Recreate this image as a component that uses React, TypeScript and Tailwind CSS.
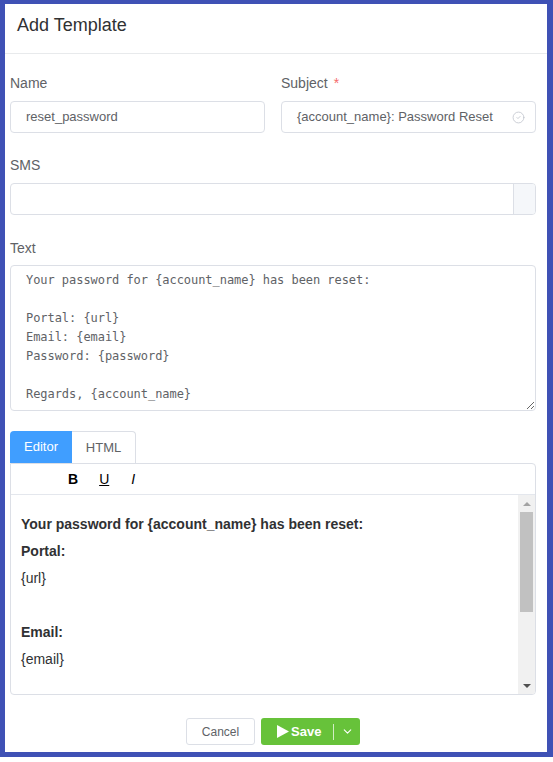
import React from 'react'
import { CircleCheck, ChevronDown } from 'lucide-react'

// ─── Add Template dialog ─────────────────────────────────────────────────────

const TEXT_BODY = `Your password for {account_name} has been reset:

Portal: {url}
Email: {email}
Password: {password}

Regards, {account_name}`

const sans = "font-['Liberation_Sans',Arial,sans-serif]"

export default function App() {
  return (
    <div className={`w-[553px] h-[762px] bg-white ${sans}`}>
      <div className="w-[553px] h-[757px] box-border border-l-[5px] border-t-[4px] border-r-[6px] border-b-[5px] border-[#3f51b5] flex flex-col">
        {/* Header */}
        <div className="h-[50px] shrink-0 border-b border-[#e8eaec] flex items-center pl-[12px] pb-[6px]">
          <h1 className="text-[18px] text-[#303133]">Add Template</h1>
        </div>

        {/* Form */}
        <div className="flex-1 flex flex-col pl-[5px] pr-[11px] pt-[19px]">
          <div className="grid grid-cols-2 gap-x-[16px]">
            <Field label="Name">
              <div className="h-[32px] border border-[#dcdfe6] rounded-[4px] flex items-center px-[15px] text-[13px] text-[#606266]">
                reset_password
              </div>
            </Field>
            <Field label="Subject" required>
              <div className="h-[32px] border border-[#dcdfe6] rounded-[4px] flex items-center pl-[15px] pr-[10px] text-[13px] text-[#606266]">
                <span className="flex-1">{'{account_name}: Password Reset'}</span>
                <CircleCheck className="w-[13px] h-[13px] text-[#c0c4cc]" strokeWidth={1.5} />
              </div>
            </Field>
          </div>

          <div className="mt-[22px]">
            <Field label="SMS">
              <div className="h-[32px] border border-[#dcdfe6] rounded-[4px] flex overflow-hidden">
                <div className="flex-1" />
                <div className="w-[22px] bg-[#f5f7fa] border-l border-[#dcdfe6]" />
              </div>
            </Field>
          </div>

          <div className="mt-[23px]">
            <Field label="Text" gap="mb-[7px]">
              <textarea
                readOnly
                value={TEXT_BODY}
                className="block w-full h-[146px] border border-[#dcdfe6] rounded-[4px] px-[15px] py-[5px] text-[12px] leading-[19px] text-[#606266] resize-y outline-none font-['DejaVu_Sans_Mono',monospace] tracking-[-0.05px] overflow-hidden"
              />
            </Field>
          </div>

          {/* Editor tabs */}
          <div className="mt-[20px] flex">
            <div className="w-[62px] h-[32px] bg-[#409eff] text-white text-[13px] flex items-center justify-center rounded-tl-[4px]">
              Editor
            </div>
            <div className="w-[64px] h-[32px] bg-white text-[#606266] text-[13px] flex items-center justify-center border border-l-0 border-b-0 border-[#dcdfe6] rounded-tr-[4px]">
              HTML
            </div>
          </div>

          <div className="h-[232px] border border-[#dcdfe6] rounded-b-[4px] rounded-tr-[4px] flex flex-col overflow-hidden">
            <div className="h-[31px] shrink-0 border-b border-[#e4e7ed] flex items-center text-[14px] text-black">
              <span className="ml-[57px] font-bold">B</span>
              <span className="ml-[21px] underline">U</span>
              <span className="ml-[22px] italic">I</span>
            </div>
            <div className="flex-1 flex min-h-0">
              <div className="flex-1 pl-[10px] pt-[16px] text-[14px] text-[#303133]">
                <p className="h-[27px] leading-[27px] font-bold">Your password for {'{account_name}'} has been reset:</p>
                <p className="h-[27px] leading-[27px] font-bold">Portal:</p>
                <p className="h-[27px] leading-[27px]">{'{url}'}</p>
                <p className="h-[27px]" />
                <p className="h-[27px] leading-[27px] font-bold">Email:</p>
                <p className="h-[27px] leading-[27px]">{'{email}'}</p>
              </div>
              {/* Scrollbar */}
              <div className="w-[17px] bg-[#f1f1f1] flex flex-col items-center">
                <div className="h-[17px] flex items-center justify-center">
                  <div className="w-0 h-0 border-l-[4px] border-r-[4px] border-b-[4px] border-l-transparent border-r-transparent border-b-[#a3a3a3]" />
                </div>
                <div className="w-[13px] h-[100px] bg-[#c1c1c1]" />
                <div className="flex-1" />
                <div className="h-[17px] flex items-center justify-center">
                  <div className="w-0 h-0 border-l-[4px] border-r-[4px] border-t-[4px] border-l-transparent border-r-transparent border-t-[#505050]" />
                </div>
              </div>
            </div>
          </div>

          {/* Footer */}
          <div className="mt-[23px] flex justify-center gap-[6px]">
            <button className="w-[69px] h-[27px] border border-[#dcdfe6] rounded-[3px] text-[12px] text-[#606266] bg-white">
              Cancel
            </button>
            <div className="w-[99px] h-[27px] rounded-[3px] bg-[#67c23a] text-white flex items-center">
              <div className="flex items-center pl-[16px] w-[72px]">
                <svg width="12" height="13" viewBox="0 0 12 13" className="mr-[2px]">
                  <path d="M0 0 L12 6.5 L0 13 Z" fill="white" />
                </svg>
                <span className="text-[13px] font-bold">Save</span>
              </div>
              <div className="w-px h-[16px] bg-[#d1edc4]" />
              <div className="flex-1 flex items-center justify-center">
                <ChevronDown className="w-[13px] h-[13px]" strokeWidth={2} />
              </div>
            </div>
          </div>
        </div>
      </div>
    </div>
  )
}

function Field({
  label,
  required,
  gap = 'mb-[8px]',
  children,
}: {
  label: string
  required?: boolean
  gap?: string
  children: React.ReactNode
}) {
  return (
    <div>
      <label className={`block h-[20px] leading-[20px] text-[14px] text-[#606266] ${gap}`}>
        {label}
        {required && <span className="ml-[6px] text-[#f56c6c]">*</span>}
      </label>
      {children}
    </div>
  )
}
